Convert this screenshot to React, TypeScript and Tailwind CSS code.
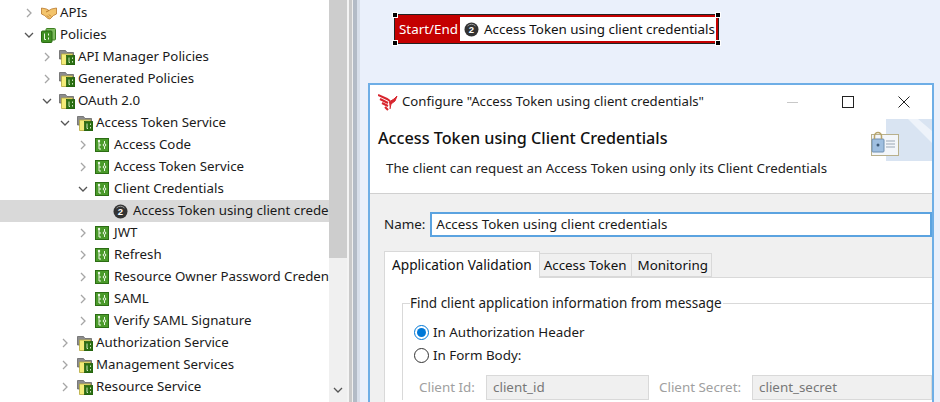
const font = "font-['Noto_Sans',sans-serif]";

function Chevron({ open }: { open?: boolean }) {
  return (
    <svg width="10" height="10" viewBox="0 0 10 10" fill="none" stroke={open ? "#555" : "#a6a6a6"} strokeWidth="1.3">
      <path d={open ? "M1 3l4 4 4-4" : "M3 1l4 4-4 4"} />
    </svg>
  );
}

function FolderIcon() {
  return (
    <svg width="16" height="16" viewBox="0 0 16 16">
      <path d="M.5 1.500h6l1.500 2h6.500V10H.5z" fill="#8d8d8d" stroke="#666" strokeWidth="0.8" />
      <path d="M2.500 5h11v10.500h-11z" fill="#f4ec7a" stroke="#b3a73a" strokeWidth="0.8" />
      <rect x="7.500" y="6.500" width="8.500" height="9.500" fill="#2a6f12" stroke="#1f560c" strokeWidth="0.7" />
      <path d="M10 8.500v5h1M13.500 8.500v1.500M13.500 12v1.500" stroke="#dff0d0" strokeWidth="0.9" fill="none" />
    </svg>
  );
}

function ScriptIcon() {
  return (
    <svg width="14" height="14" viewBox="0 0 14 14">
      <rect x="0.500" y="0.500" width="13" height="13" fill="#4a9a2a" stroke="#2c6d14" />
      <path d="M4 3v8h2M4 7h2M9.500 3v2.500M9.500 8.500V11" stroke="#eef7e6" strokeWidth="1" fill="none" />
      <circle cx="9.500" cy="7" r="1.300" fill="none" stroke="#eef7e6" />
      <circle cx="4" cy="3" r="1.200" fill="#eef7e6" />
    </svg>
  );
}

function StackIcon() {
  return (
    <svg width="15" height="15" viewBox="0 0 15 15">
      <rect x="5" y="0.500" width="9.500" height="11.500" rx="1" fill="#7dbb5e" stroke="#3e7f22" />
      <rect x="0.500" y="3" width="10.500" height="11.500" rx="1" fill="#3f8f22" stroke="#2a6b12" />
      <path d="M3.500 5.500v6h1.500M7.500 5.500v2M7.500 9.500v2" stroke="#eef7e6" fill="none" />
    </svg>
  );
}

function ApiIcon() {
  return (
    <svg width="16" height="13" viewBox="0 0 16 13">
      <path d="M.5 1l5 1 2.500 1.500L10.500 2l5-1v6l-3 1.500L9 12l-2-.5-3.500-3L.5 7z" fill="#f3c46c" stroke="#b9772a" strokeWidth="0.8" />
      <path d="M5 5l3-1.500M6 8.500l2 2M8 7.500l2 2" stroke="#a8651d" strokeWidth="0.8" fill="none" />
    </svg>
  );
}

function NumberIcon() {
  return (
    <svg width="15" height="15" viewBox="0 0 15 15">
      <circle cx="7.500" cy="7.500" r="7" fill="#333" />
      <path d="M3.500 4a5.500 5.500 0 0 1 8 0" stroke="#999" fill="none" />
      <text x="7.500" y="10.800" textAnchor="middle" fontSize="9.500" fontWeight="700" fill="#fff" fontFamily="Liberation Sans">2</text>
    </svg>
  );
}

type Row = { label: string; depth: number; icon: "api" | "stack" | "folder" | "script" | "num"; open?: boolean; leaf?: boolean; selected?: boolean };

const rows: Row[] = [
  { label: "APIs", depth: 0, icon: "api" },
  { label: "Policies", depth: 0, icon: "stack", open: true },
  { label: "API Manager Policies", depth: 1, icon: "folder" },
  { label: "Generated Policies", depth: 1, icon: "folder" },
  { label: "OAuth 2.0", depth: 1, icon: "folder", open: true },
  { label: "Access Token Service", depth: 2, icon: "folder", open: true },
  { label: "Access Code", depth: 3, icon: "script" },
  { label: "Access Token Service", depth: 3, icon: "script" },
  { label: "Client Credentials", depth: 3, icon: "script", open: true },
  { label: "Access Token using client credentials", depth: 4, icon: "num", leaf: true, selected: true },
  { label: "JWT", depth: 3, icon: "script" },
  { label: "Refresh", depth: 3, icon: "script" },
  { label: "Resource Owner Password Credentials", depth: 3, icon: "script" },
  { label: "SAML", depth: 3, icon: "script" },
  { label: "Verify SAML Signature", depth: 3, icon: "script" },
  { label: "Authorization Service", depth: 2, icon: "folder" },
  { label: "Management Services", depth: 2, icon: "folder" },
  { label: "Resource Service", depth: 2, icon: "folder" },
];

const depthPad = ["pl-[24px]", "pl-[42px]", "pl-[60px]", "pl-[78px]", "pl-[96px]"];

function TreeRow({ row }: { row: Row }) {
  return (
    <div className={`flex h-[22px] shrink-0 items-center whitespace-nowrap ${depthPad[row.depth]} ${row.selected ? "bg-[#d9d9d9]" : ""}`}>
      <span className="flex w-[10px] shrink-0 justify-center">{!row.leaf && <Chevron open={row.open} />}</span>
      <span className="ml-[6px] flex w-[18px] shrink-0 items-center justify-start pl-px">
        {row.icon === "api" && <ApiIcon />}
        {row.icon === "stack" && <StackIcon />}
        {row.icon === "folder" && <FolderIcon />}
        {row.icon === "script" && <ScriptIcon />}
        {row.icon === "num" && <NumberIcon />}
      </span>
      <span className={`text-[13.3px] text-[#1a1a1a] ${row.leaf ? "ml-[3px]" : "ml-[2px]"}`}>{row.label}</span>
    </div>
  );
}

function Tree() {
  return (
    <div className="flex h-full w-[347px] shrink-0 bg-white">
      <div className="flex w-[329px] flex-col overflow-hidden pt-[2px]">
        {rows.map((r, i) => (
          <TreeRow key={i} row={r} />
        ))}
      </div>
      <div className="flex w-[18px] flex-col bg-[#f0f0f0]">
        <div className="h-[258px] bg-[#cdcdcd]" />
        <div className="flex flex-1 items-end justify-center pb-[7px]">
          <Chevron open />
        </div>
      </div>
    </div>
  );
}

function Splitter() {
  return (
    <div className="flex w-[13px] shrink-0">
      <div className="w-[2px] bg-[#f4f4f4]" />
      <div className="w-[3px] bg-[#c9c9c9]" />
      <div className="w-px bg-[#efefef]" />
      <div className="w-[4px] bg-[#b3bbc6]" />
      <div className="w-[3px] bg-[#d8dfea]" />
    </div>
  );
}

function Node() {
  const handle = "absolute h-[4px] w-[4px] border border-white bg-black box-content";
  return (
    <div className="relative ml-[34px] mt-[14px] flex h-[30px] w-[325px] shrink-0 border border-[#222] bg-[#c40000] p-[2px]">
      <div className="flex w-[63px] items-center justify-center whitespace-nowrap text-[13.400px] text-white">Start/End</div>
      <div className="flex flex-1 items-center gap-[5px] bg-white pl-[4px] text-[13.400px] text-[#111]">
        <NumberIcon />
        <span className="whitespace-nowrap">Access Token using client credentials</span>
      </div>
      <span className={`${handle} -left-[3px] -top-[3px]`} />
      <span className={`${handle} -right-[3px] -top-[3px]`} />
      <span className={`${handle} -left-[3px] -bottom-[3px]`} />
      <span className={`${handle} -right-[3px] -bottom-[3px]`} />
    </div>
  );
}

function Logo() {
  return (
    <svg width="20" height="17" viewBox="0 0 20 17" fill="none" stroke="#d8262e" strokeWidth="2">
      <path d="M0 1l9 4 3 2M2 5l8 4M4 9l6 3M7 13l3 3" />
      <path d="M11 8l5-3 3-3-2 5-4 3-1 5" fill="#d8262e" strokeWidth="1" />
    </svg>
  );
}

function TitleBar() {
  return (
    <div className="flex h-[34px] shrink-0 items-center bg-white pl-[8px]">
      <Logo />
      <span className="ml-[4px] whitespace-nowrap text-[13.200px] text-[#1a1a1a]">Configure "Access Token using client credentials"</span>
      <div className="ml-auto flex items-center">
        <span className="h-px w-[11px] bg-[#c8c8c8]" />
        <span className="ml-[44px] h-[12px] w-[12px] border border-[#222]" />
        <svg className="ml-[44px] mr-[22px]" width="12" height="12" viewBox="0 0 12 12" stroke="#222" strokeWidth="1" fill="none">
          <path d="M.5.5l11 11M11.500.5l-11 11" />
        </svg>
      </div>
    </div>
  );
}

function Banner() {
  return (
    <div className="relative flex h-[74px] shrink-0 flex-col bg-white pl-[8px] pt-[8px]">
      <div className="whitespace-nowrap text-[16.200px] font-medium leading-[22px] text-[#111]">Access Token using Client Credentials</div>
      <div className="ml-[8px] mt-[9px] whitespace-nowrap text-[13.300px] leading-[20px] text-[#222]">The client can request an Access Token using only its Client Credentials</div>
      <svg className="absolute right-0 top-0" width="46" height="42" viewBox="0 0 46 42">
        <rect width="46" height="42" fill="#d9e4f2" />
        <path d="M22 0h10l14 12v12z" fill="#eef3fa" />
      </svg>
      <svg className="absolute right-[33px] top-[12px]" width="30" height="25" viewBox="0 0 30 25">
        <rect x="2.500" y="3.500" width="27" height="21" fill="#f3f6fa" stroke="#b8b08c" />
        <path d="M17 10h9M17 13h9M17 16h9" stroke="#9aa7b5" />
        <rect x="3" y="8" width="12" height="13" rx="1" fill="#9fbfe0" stroke="#6f8fb0" />
        <path d="M5.500 8V5a3.500 3.500 0 0 1 7 0v3" fill="none" stroke="#b6a36a" strokeWidth="1.500" />
        <circle cx="9" cy="14" r="1.500" fill="#3d5a78" />
      </svg>
    </div>
  );
}

function Tab({ label, active, className }: { label: string; active?: boolean; className?: string }) {
  return active ? (
    <div className="z-10 -mb-px flex h-[27px] items-center border border-b-0 border-[#d9d9d9] bg-white px-[7px] text-[13.700px] text-[#111]">{label}</div>
  ) : (
    <div className={`flex h-[24px] items-center border border-l-0 border-[#d9d9d9] bg-[#f0f0f0] text-[13.400px] text-[#111] ${className}`}>{label}</div>
  );
}

function Radio({ checked, label }: { checked?: boolean; label: string }) {
  return (
    <div className="flex h-[22px] items-center gap-[4px] text-[13.400px] text-[#1a1a1a]">
      {checked ? (
        <span className="flex h-[15px] w-[15px] items-center justify-center rounded-full border border-[#0078d7] bg-white">
          <span className="h-[9px] w-[9px] rounded-full bg-[#0078d7]" />
        </span>
      ) : (
        <span className="h-[15px] w-[15px] rounded-full border border-[#333] bg-white" />
      )}
      <span>{label}</span>
    </div>
  );
}

function Dialog() {
  return (
    <div className="ml-[8px] mt-[39px] flex min-h-0 w-[566px] flex-1 flex-col border-x-2 border-t-2 border-[#6eaee6] bg-[#f0f0f0]">
      <TitleBar />
      <Banner />
      <div className="h-px shrink-0 bg-[#d0d0d0]" />
      <div className="flex shrink-0 items-center pl-[14px] pt-[18px] text-[13.400px] text-[#1a1a1a]">
        <span>Name:</span>
        <div className="ml-[5px] flex h-[25px] flex-1 items-center border-2 border-[#5ba3e0] bg-white pl-[4px]">Access Token using client credentials</div>
      </div>
      <div className="flex shrink-0 items-end pl-[14px] pt-[14px]">
        <Tab label="Application Validation" active />
        <Tab label="Access Token" className="px-[4px]" />
        <Tab label="Monitoring" className="pl-[6px] pr-[3px]" />
      </div>
      <div className="ml-[14px] flex-1 border-l border-t border-[#d9d9d9] bg-white pl-[17px] pt-[25px]">
        <div className="relative border-l border-t border-[#d9d9d9] pt-[17px]">
          <span className="absolute -top-[11px] left-[7px] whitespace-nowrap bg-white pr-[1px] text-[13.500px] leading-[20px] text-[#1a1a1a]">Find client application information from message</span>
          <div className="pl-[11px]">
            <Radio checked label="In Authorization Header" />
            <div className="mt-px">
              <Radio label="In Form Body:" />
            </div>
          </div>
          <div className="mt-[9px] flex items-center pl-[16px] text-[13.400px] text-[#a0a0a0]">
            <span className="w-[67px]">Client Id:</span>
            <span className="flex h-[25px] w-[163px] items-center border border-[#d9d9d9] bg-[#f0f0f0] pl-[6px] text-[#777]">client_id</span>
            <span className="ml-[10px] w-[93px]">Client Secret:</span>
            <span className="flex h-[25px] flex-1 items-center border border-[#d9d9d9] bg-[#f0f0f0] pl-[6px] text-[#777]">client_secret</span>
          </div>
        </div>
      </div>
    </div>
  );
}

export default function App() {
  return (
    <div className={`flex h-[402px] w-[940px] overflow-hidden bg-white ${font}`}>
      <Tree />
      <Splitter />
      <div className="flex min-w-0 flex-1 flex-col overflow-hidden bg-[#eaf0fb]">
        <Node />
        <Dialog />
      </div>
    </div>
  );
}
